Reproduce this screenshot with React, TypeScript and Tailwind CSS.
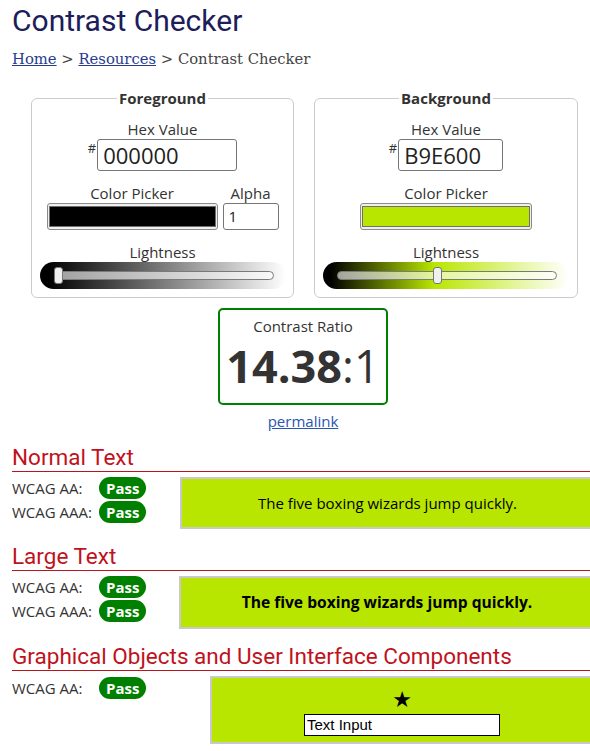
import React from "react";

function Track({ gradient, thumbLeft }: { gradient: string; thumbLeft: number }) {
  return (
    <div className={`h-[27px] w-[246px] mx-auto rounded-full pl-[14px] pr-[12px] flex items-center ${gradient}`}>
      <div className="relative h-[9px] w-full rounded-full border border-[#7a7a7a] bg-[rgba(255,255,255,0.62)]">
        <div
          className="absolute top-[-5px] h-[17px] w-[9px] rounded-[3px] border border-[#767676] bg-[#f0f0f0]"
          style={{ left: thumbLeft }}
        />
      </div>
    </div>
  );
}

function Swatch({ color, width }: { color: string; width: string }) {
  return (
    <div className={`h-[27px] ${width} rounded-[3px] border border-[#8a8a8a] bg-[#efefef] px-[1px] py-[2px] flex`}>
      <div className={`flex-1 border border-[#6f6f6f] ${color}`} />
    </div>
  );
}

function PassRow({ label }: { label: string }) {
  return (
    <div className="flex items-center h-[24px]">
      <span className="w-[87px] text-[15px] leading-[20px] text-[#333]">{label}</span>
      <span className="h-[22px] px-[7px] rounded-full bg-[#008000] text-white font-bold text-[15px] leading-[22px]">
        Pass
      </span>
    </div>
  );
}

function Heading({ children, mt }: { children: React.ReactNode; mt: string }) {
  return (
    <h2
      className={`${mt} ml-[12px] pb-[1px] border-b border-[#b9141c] font-['Roboto'] text-[22.5px] leading-[26px] text-[#c0121c]`}
    >
      {children}
    </h2>
  );
}

export default function App() {
  return (
    <div className="w-[590px] h-[751px] overflow-hidden bg-white font-['Open_Sans',sans-serif] text-[#333]">
      <h1 className="pl-[12px] pt-[3px] font-['Roboto',sans-serif] text-[30px] leading-[36px] text-[#1c1d5a]">
        Contrast Checker
      </h1>
      <nav className="pl-[12px] mt-[10px] font-['DejaVu_Serif',serif] text-[14.8px] leading-[20px] text-[#444]">
        <a className="underline text-[#283c8f]" href="#">Home</a> &gt;{" "}
        <a className="underline text-[#283c8f]" href="#">Resources</a> &gt; Contrast Checker
      </nav>

      <div className="ml-[31px] w-[544px] mt-[19px]">
        <div className="flex gap-[20px]">
          <fieldset className="w-[263px] shrink-0 border border-[#cccccc] rounded-[6px] pb-[8px]">
            <legend className="mx-auto px-[2px] text-[15px] leading-[20px] font-bold text-[#333]">Foreground</legend>
            <div className="mt-[11px] text-center text-[15px] leading-[20px]">Hex Value</div>
            <div className="flex justify-center">
              <span className="text-[13px] leading-none mt-[3px] mr-[1px]">#</span>
              <div className="w-[140px] h-[32px] border border-[#767676] rounded-[3px] pl-[5px] text-[22px] leading-[30px] text-[#222]">
                000000
              </div>
            </div>
            <div className="mt-[12px] flex justify-center gap-[5px]">
              <div className="flex flex-col items-center">
                <div className="text-[15px] leading-[20px]">Color Picker</div>
                <Swatch color="bg-black" width="w-[171px]" />
              </div>
              <div className="flex flex-col items-center">
                <div className="text-[15px] leading-[20px]">Alpha</div>
                <div className="w-[56px] h-[27px] border border-[#767676] rounded-[3px] pl-[5px] text-[15px] leading-[25px] text-[#222]">
                  1
                </div>
              </div>
            </div>
            <div className="mt-[12px] text-center text-[15px] leading-[20px]">Lightness</div>
            <Track gradient="bg-[linear-gradient(to_right,#000_0%,#000_3%,#fff_100%)]" thumbLeft={-1} />
          </fieldset>

          <fieldset className="w-[264px] shrink-0 border border-[#cccccc] rounded-[6px] pb-[8px]">
            <legend className="mx-auto px-[2px] text-[15px] leading-[20px] font-bold text-[#333]">Background</legend>
            <div className="mt-[11px] text-center text-[15px] leading-[20px]">Hex Value</div>
            <div className="flex justify-center">
              <span className="text-[13px] leading-none mt-[3px] mr-[1px]">#</span>
              <div className="w-[105px] h-[32px] border border-[#767676] rounded-[3px] pl-[5px] text-[22px] leading-[30px] text-[#222]">
                B9E600
              </div>
            </div>
            <div className="mt-[12px] flex flex-col items-center">
              <div className="text-[15px] leading-[20px]">Color Picker</div>
              <Swatch color="bg-[#b9e600]" width="w-[172px]" />
            </div>
            <div className="mt-[12px] text-center text-[15px] leading-[20px]">Lightness</div>
            <Track gradient="bg-[linear-gradient(to_right,#000_0%,#000_3%,#b9e600_45%,#fff_100%)]" thumbLeft={95} />
          </fieldset>
        </div>

        <div className="mx-auto mt-[10px] w-[170px] h-[97px] border-2 border-[#008000] rounded-[5px] flex flex-col items-center pt-[6px]">
          <div className="text-[15px] leading-[20px]">Contrast Ratio</div>
          <div className="mt-[6px] text-[45px] leading-[48px] text-[#333]">
            <span className="font-bold">14.38</span>:1
          </div>
        </div>
        <div className="mt-[6px] text-center text-[15px] leading-[20px]">
          <a href="#" className="underline text-[#2a55b0]">permalink</a>
        </div>
      </div>

      <Heading mt="mt-[13px]">Normal Text</Heading>
      <div className="mt-[4px] ml-[12px] flex items-start">
        <div className="w-[168px] shrink-0">
          <PassRow label="WCAG AA:" />
          <PassRow label="WCAG AAA:" />
        </div>
        <div className="mt-[1px] shrink-0 w-[415px] h-[52px] border-2 border-[#c9c9c9] bg-[#b9e600] flex items-center justify-center text-[15px] text-black">
          The five boxing wizards jump quickly.
        </div>
      </div>

      <Heading mt="mt-[14px]">Large Text</Heading>
      <div className="mt-[4px] ml-[12px] flex items-start">
        <div className="w-[167px] shrink-0">
          <PassRow label="WCAG AA:" />
          <PassRow label="WCAG AAA:" />
        </div>
        <div className="mt-[1px] shrink-0 w-[416px] h-[53px] border-2 border-[#c9c9c9] bg-[#b9e600] flex items-center justify-center text-[15.6px] font-bold text-black">
          The five boxing wizards jump quickly.
        </div>
      </div>

      <Heading mt="mt-[14px]">Graphical Objects and User Interface Components</Heading>
      <div className="mt-[5px] ml-[12px] flex items-start">
        <div className="w-[198px] shrink-0">
          <PassRow label="WCAG AA:" />
        </div>
        <div className="shrink-0 w-[384px] h-[68px] border-2 border-[#c9c9c9] bg-[#b9e600] flex flex-col items-center pt-[10px]">
          <div className="font-['DejaVu_Sans'] text-[22px] leading-[24px] text-black">★</div>
          <div className="mt-[2px] w-[196px] h-[22px] border border-black bg-white pl-[2px] font-['Liberation_Sans',sans-serif] text-[15px] leading-[20px] text-black">
            Text Input
          </div>
        </div>
      </div>
    </div>
  );
}
